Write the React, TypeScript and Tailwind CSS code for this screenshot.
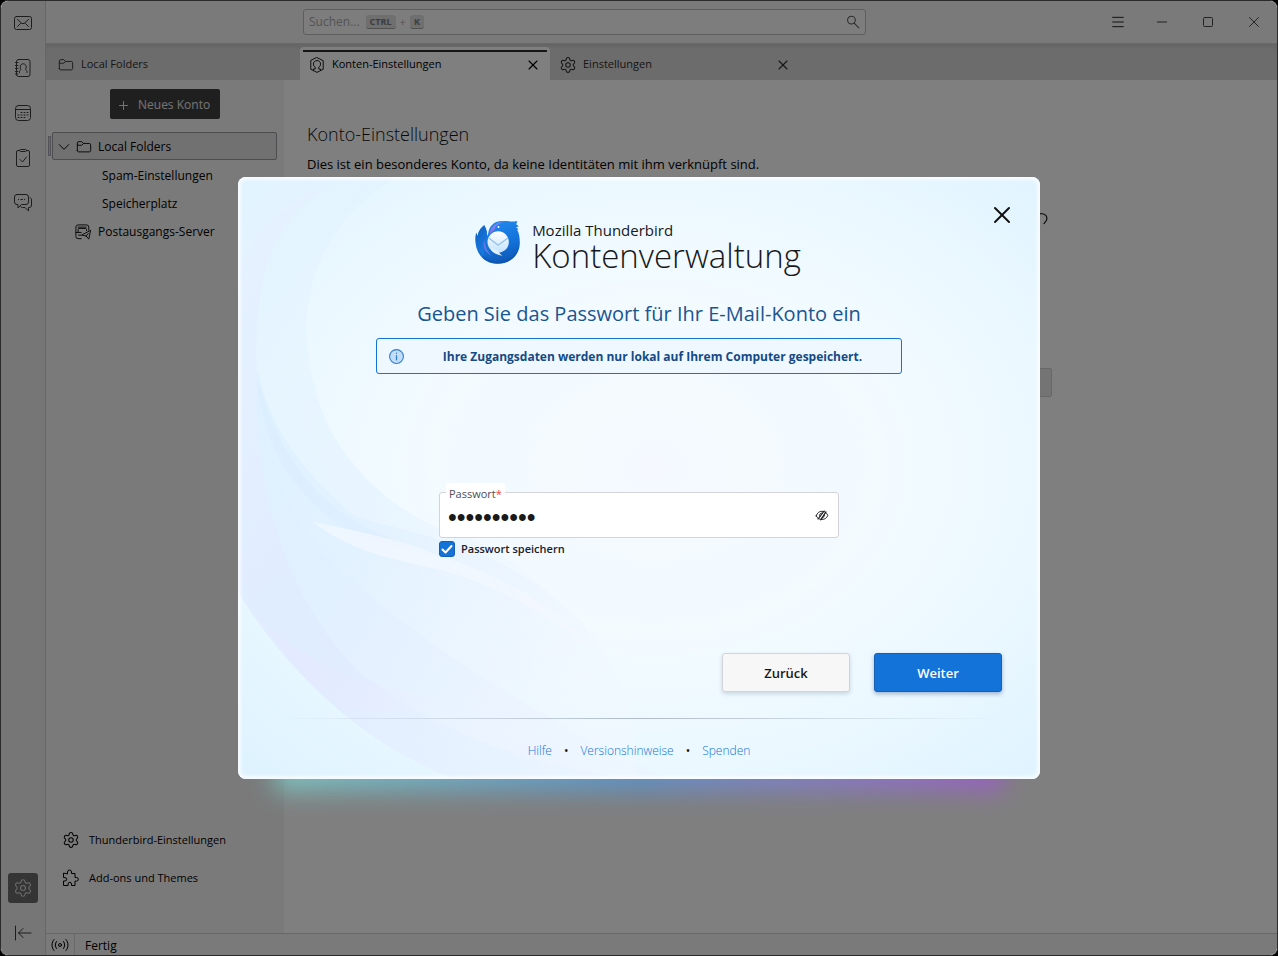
// src/App.tsx
import React, { useState } from 'react';
import { Menu, Minus, Settings, Square, X } from 'lucide-react';

type IconProps = { className?: string };

function Icon({ className = 'size-[18px]', children }: IconProps & { children: React.ReactNode }) {
  return (
    <svg className={className} viewBox="0 0 18 18" fill="none" stroke="currentColor" strokeLinecap="round" strokeLinejoin="round" aria-hidden="true">
      {children}
    </svg>
  );
}

const MailIcon = () => (
  <Icon>
    <rect x="0.5" y="2.5" width="17" height="13" rx="2" />
    <path d="m3.500 5.500 4.500 4h2l4.500-4M3.500 12.500l3-3M14.500 12.500l-3-3" />
  </Icon>
);

const AddressBookIcon = () => (
  <Icon>
    <rect x="2.500" y="0.5" width="13.500" height="17" rx="2" />
    <path d="M1.500 3.500h2.500M1.500 6.500h2.500M1.500 9.500h2.500M1.500 12.500h2.500M1.500 15h2.500" />
    <path d="M5.500 13.500v-1c0-1 .8-1.500 1.500-2-.5-.6-.8-1.500-.8-2.500 0-1.900 1.200-3.200 3-3.200s3 1.300 3 3.200c0 1-.3 1.900-.8 2.500.700.5 1.600 1 1.600 2v1" />
  </Icon>
);

const CalendarIcon = () => (
  <Icon>
    <rect x="1.500" y="1.500" width="15" height="15" rx="3" />
    <path d="M1.500 5.500h15" />
    <path d="M7 8.500h1M10 8.500h1M13 8.500h1M4 11h1M7 11h1M10 11h1M13 11h1M4 13.500h1M7 13.500h1M10 13.500h1" />
  </Icon>
);

const TasksIcon = () => (
  <Icon>
    <path d="M5.500 1.500H4a1.500 1.500 0 0 0-1.500 1.500v13A1.500 1.500 0 0 0 4 17.500h10a1.500 1.500 0 0 0 1.500-1.500V3A1.500 1.500 0 0 0 14 1.500h-1.500" />
    <path d="M5.500 1.500c0-.6.400-1 1-1h5c.6 0 1 .4 1 1s-.4 1-1 1h-5c-.6 0-1-.4-1-1zM6 10.500l2.500 2.500 4-5" />
  </Icon>
);

const ChatIcon = () => (
  <Icon>
    <path d="M3 .5h9A2.500 2.500 0 0 1 14.500 3v5a2.500 2.500 0 0 1-2.500 2.500H7.500L4 14v-3.500H3A2.500 2.500 0 0 1 .5 8V3A2.500 2.500 0 0 1 3 .5z" />
    <path d="M16 3.500c.9.500 1.500 1.300 1.500 2.500v5c0 1.500-.8 2.500-2.500 2.500h-.5v3.500L11 13.500H8.500c-.8 0-1.400-.3-1.800-.8M4.500 5.500h.2M7 5.500h1.500M10.500 5.500h.2" />
  </Icon>
);

const FolderIcon = () => (
  <Icon className="size-4">
    <path d="M1.500 13V4.500c0-.9.6-1.500 1.500-1.500h3.500l2 2H15c.9 0 1.500.6 1.500 1.500V13c0 .9-.6 1.500-1.500 1.500H3c-.9 0-1.500-.6-1.500-1.500z" />
    <path d="M1.500 7h5l2-2" />
  </Icon>
);

const OutgoingIcon = () => (
  <Icon className="size-4">
    <path d="M7 16.500H3.500A2.500 2.500 0 0 1 1 14V3.500A2.500 2.500 0 0 1 3.500 1h9.500a2.500 2.500 0 0 1 2.500 2.500V7" />
    <path d="M1 9.500h6M3.500 9V6c0-.6.400-1 1-1h7.500c.6 0 1 .4 1 1v1.500M4 12.500h3M3.500 3.500h9" />
    <path d="M17.500 7.500 15.500 17l-3-3.500L8 12.500zM12.500 13.500l2.500-3" />
  </Icon>
);

const AccountIcon = () => (
  <Icon className="size-4">
    <path d="m9 .7 7 3.500v9.600l-7 3.500-7-3.500V4.200z" />
    <path d="M5 15v-1.500h2V11.500C5.800 10.700 5 9.500 5 8c0-2.400 1.700-4 4-4s4 1.600 4 4c0 1.500-.8 2.700-2 3.500v2h2V15" />
  </Icon>
);

const PuzzleIcon = () => (
  <Icon>
    <path d="M5.500 4.500V3a2 2 0 0 1 4 0v1.500h3.500v4h1.500a1.800 1.800 0 0 1 0 3.600H13v4.400h-3.500V15a1.700 1.700 0 0 0-3.400 0v1.500H1.500V12H3a1.700 1.700 0 0 0 0-3.400H1.500V4.500z" />
  </Icon>
);

const CollapseIcon = () => (
  <Icon>
    <path d="M1.500 2v14M17 9H4.500M9 4.500 4.500 9 9 13.500" />
  </Icon>
);

const SignalIcon = () => (
  <Icon>
    <circle cx="9" cy="9" r="1.500" />
    <path d="M5.500 12.500c-1.600-2-1.600-5 0-7M12.500 5.500c1.600 2 1.600 5 0 7M3 14.500c-2.700-3-2.700-8 0-11M15 3.500c2.700 3 2.700 8 0 11" />
  </Icon>
);

const SearchIcon = () => (
  <Icon className="size-[14px]">
    <circle cx="7" cy="6.500" r="5" strokeWidth="1.300" />
    <path d="m10.500 10.500 6 6" strokeWidth="1.300" />
  </Icon>
);

const EyeOffIcon = () => (
  <Icon className="size-4">
    <path d="M2.500 10C3.500 6.500 6 4.800 9 4.800s5.500 1.700 6.500 4.700C14.500 12.500 12 14 9 14s-5.500-1.200-6.500-4z" />
    <path d="M9.500 6.800a2.800 2.800 0 0 0-3 4M11.800 8.500a2.800 2.800 0 0 1-2.800 3.700" />
    <path d="m4.500 13.500 7-9M7.500 14.500l6-9" strokeWidth="1.300" />
  </Icon>
);

function ThunderbirdLogo() {
  return (
    <svg className="h-11 w-[45px]" viewBox="10 9 134 132" aria-hidden="true">
      <defs>
        <linearGradient id="body" x1="0.300" y1="0" x2="0.600" y2="1">
          <stop offset="0" stopColor="#2289ee" />
          <stop offset="0.600" stopColor="#1271d8" />
          <stop offset="1" stopColor="#0f57b4" />
        </linearGradient>
        <linearGradient id="flame" x1="0" y1="0" x2="0.500" y2="1">
          <stop offset="0" stopColor="#0f5fc0" />
          <stop offset="1" stopColor="#1a7be2" />
        </linearGradient>
        <linearGradient id="mail" x1="0" y1="0" x2="0" y2="1">
          <stop offset="0" stopColor="#ffffff" />
          <stop offset="1" stopColor="#c3e2fd" />
        </linearGradient>
        <linearGradient id="beak" x1="0" y1="1" x2="1" y2="0">
          <stop offset="0" stopColor="#9a70e6" />
          <stop offset="0.600" stopColor="#7a80ee" />
          <stop offset="1" stopColor="#3d8df0" />
        </linearGradient>
      </defs>
      {/* body with the wing flame on the left and the crest on the right */}
      <path
        fill="url(#body)"
        d="M37 25C27 33 19 43 18 58l-5-11C3 95 27 140 77 140c40 0 67-28 67-62 0-16-2-30-8-40l4-1-7-6 8-3-8-6 4-9c-20 2-38-3-55 0-18 3-30 16-33 37l-4 8c2-12-2-24-8-33z"
      />
      <path fill="url(#flame)" d="M37 25C27 33 19 43 18 58l-5-11c-6 32 3 58 22 75 0-24 0-44 10-62 2-14-2-25-8-35z" />
      <path fill="url(#beak)" d="M53 53c2-22 18-40 50-41-10 3-20 7-27 13-5 4-6 9-9 14-4 2-9 7-14 14z" />
      <path fill="#0d52ab" opacity="0.600" d="M22 100c10 22 30 33 55 33 32 0 55-16 64-42-6 32-31 49-64 49-27 0-47-16-55-40z" />
      <path fill="#8377e8" opacity="0.700" d="M37 70c-6 20 2 37 22 46-10-10-18-24-22-46z" />
      <circle cx="79" cy="75" r="32" fill="url(#mail)" />
      <path fill="#dff0ff" d="M54 90c4 16 16 22 38 26-8-5-11-9-12-14z" />
      <path fill="none" stroke="#93c2f0" strokeWidth="4" strokeLinejoin="round" d="m51 63 28 22 29-22" />
      <circle cx="80" cy="30" r="3" fill="#fff" />
    </svg>
  );
}

// Soft ribbons behind the dialog content
function DialogArt() {
  return (
    <svg className="absolute inset-0 size-full" viewBox="0 0 802 602" preserveAspectRatio="none" aria-hidden="true">
      <defs>
        <radialGradient id="base" cx="0.520" cy="0.480" r="0.700">
          <stop offset="0" stopColor="#f5f9ff" />
          <stop offset="0.400" stopColor="#f3fbff" />
          <stop offset="0.700" stopColor="#ebf8ff" />
          <stop offset="1" stopColor="#dff3ff" />
        </radialGradient>
        <linearGradient id="sheet" x1="0" y1="0" x2="1" y2="1">
          <stop offset="0" stopColor="#e4f4ff" />
          <stop offset="0.500" stopColor="#dff0ff" />
          <stop offset="1" stopColor="#eff5ff" stopOpacity="0.300" />
        </linearGradient>
        <linearGradient id="lavender" x1="0" y1="0" x2="1" y2="1">
          <stop offset="0" stopColor="#e6f1ff" />
          <stop offset="0.500" stopColor="#dde8ff" />
          <stop offset="1" stopColor="#ecf0ff" stopOpacity="0.300" />
        </linearGradient>
        <linearGradient id="cyan" x1="0" y1="0" x2="1" y2="0.700">
          <stop offset="0" stopColor="#ddf1ff" />
          <stop offset="0.400" stopColor="#e2f1ff" />
          <stop offset="1" stopColor="#f2f7ff" stopOpacity="0.500" />
        </linearGradient>
        <linearGradient id="pink" x1="0" y1="0" x2="1" y2="0">
          <stop offset="0" stopColor="#e6e8ff" />
          <stop offset="1" stopColor="#e8ecff" stopOpacity="0" />
        </linearGradient>
      </defs>
      <rect width="802" height="602" fill="url(#base)" />
      <path fill="url(#sheet)" opacity="0.500" d="M0 0h160C70 50 45 150 92 253c30 50 65 78 106 97 80 20 130 80 157 120C300 520 100 560 0 415z" />
      <path fill="url(#lavender)" opacity="0.700" d="M90 10C40 40 24 90 20 140c-8 90 10 190 90 260 90 80 210 150 320 202H215C110 560 40 480 0 415V90C20 50 50 20 90 10z" />
      <path fill="url(#cyan)" opacity="0.800" d="M19 190c10 60 50 110 99 150 70 20 150 30 220 100 40 45 60 90 60 162-100-10-210-50-280-110C50 420 15 320 19 190z" />
      <path fill="#d6ebff" opacity="0.350" d="M19 200c20 70 50 115 99 145 30 17 60 26 90 34-60-8-100-20-125-45C40 295 22 250 19 200z" />
      <path fill="#f3f8ff" opacity="0.700" d="M75 345c50 10 90 18 133 36 60 20 110 50 145 88-45-30-90-60-150-76-40-10-85-15-128-48z" />
      <path fill="url(#pink)" opacity="0.600" d="M30 450c50 45 120 65 200 76-50 12-90 10-125 5-30-20-55-45-75-81z" />
    </svg>
  );
}

const railItems = [
  { label: 'E-Mail', icon: <MailIcon /> },
  { label: 'Adressbuch', icon: <AddressBookIcon /> },
  { label: 'Kalender', icon: <CalendarIcon /> },
  { label: 'Aufgaben', icon: <TasksIcon /> },
  { label: 'Chat', icon: <ChatIcon /> },
];

function Rail() {
  return (
    <nav className="flex w-[45px] shrink-0 flex-col items-center border-r border-[#cfcfcf] bg-[#ededed] py-[7px] text-[#3a3a3a]">
      <div className="flex flex-col gap-[15px]">
        {railItems.map((item) => (
          <button key={item.label} aria-label={item.label} className="flex size-[30px] items-center justify-center">
            {item.icon}
          </button>
        ))}
      </div>
      <button aria-label="Einstellungen" className="mt-auto flex size-[30px] items-center justify-center rounded-[3px] bg-[#6b6b6b] text-[#d8d8d8]">
        <Settings className="size-5" strokeWidth={1.3} />
      </button>
      <button aria-label="Leiste ausblenden" className="mt-[15px] flex size-[30px] items-center justify-center">
        <CollapseIcon />
      </button>
    </nav>
  );
}

function TitleBar() {
  return (
    <header className="flex h-[43px] shrink-0 items-center border-b border-[#d2d2d2] bg-[#f5f5f5]">
      <label className="ml-[257px] flex h-[26px] w-[563px] items-center rounded-[3px] border border-[#bdbdbd] bg-[#fafafa] px-[5px] text-xs text-[#a8a8a8]">
        <span>Suchen...</span>
        <kbd className="ml-[6px] rounded-[3px] border-b border-[#a0a0a0] bg-[#dedede] px-1 font-[Open_Sans] text-[9px] leading-[13px] font-bold text-[#7a7a7a]">CTRL</kbd>
        <span className="px-1 text-[11px]">+</span>
        <kbd className="rounded-[3px] border-b border-[#a0a0a0] bg-[#dedede] px-1 font-[Open_Sans] text-[9px] leading-[13px] font-bold text-[#7a7a7a]">K</kbd>
        <input type="search" aria-label="Suchen" className="min-w-0 flex-1 bg-transparent outline-none" />
        <span className="text-[#555]">
          <SearchIcon />
        </span>
      </label>
      <div className="ml-auto flex text-[#444]">
        <button aria-label="Menü" className="flex w-[42px] items-center justify-center text-[#222]">
          <Menu className="size-4" strokeWidth={1.5} />
        </button>
        <button aria-label="Minimieren" className="flex w-[46px] items-center justify-center">
          <Minus className="size-4" strokeWidth={1.5} />
        </button>
        <button aria-label="Maximieren" className="flex w-[46px] items-center justify-center">
          <Square className="size-3" strokeWidth={2} />
        </button>
        <button aria-label="Schließen" className="flex w-[46px] items-center justify-center">
          <X className="size-[18px]" strokeWidth={1.3} />
        </button>
      </div>
    </header>
  );
}

function TabBar() {
  return (
    <div className="flex h-9 shrink-0 items-end bg-[#d9d9d9] text-[11px] text-[#2c2c2c] shadow-[inset_0_4px_5px_-2px_#c4c4c4]">
      <div className="flex h-8 w-[254px] items-center gap-[7px] px-3 pt-px">
        <FolderIcon />
        <span>Local Folders</span>
      </div>
      <div className="flex h-[33px] w-[250px] flex-col rounded-t-[4px] bg-white px-[3px] pt-[3px] text-black">
        <div className="h-[2px] bg-[#2b2b2b]" />
        <div className="flex flex-1 items-center gap-[7px] px-[6px] pb-[3px]">
          <AccountIcon />
          <span>Konten-Einstellungen</span>
          <button aria-label="Tab schließen" className="ml-auto">
            <X className="size-4" strokeWidth={1.6} />
          </button>
        </div>
      </div>
      <div className="flex h-8 w-[250px] items-center gap-[6px] px-[9px] pt-px">
        <Settings className="size-[18px]" strokeWidth={1.4} />
        <span>Einstellungen</span>
        <button aria-label="Tab schließen" className="ml-auto">
          <X className="size-4" strokeWidth={1.6} />
        </button>
      </div>
    </div>
  );
}

function Sidebar() {
  return (
    <aside className="flex w-[238px] shrink-0 flex-col bg-[#f5f5f5] text-xs text-black">
      <button className="mx-auto mt-[9px] flex h-[30px] w-[110px] items-center gap-[10px] rounded-[2px] bg-[#3f3f3f] px-[9px] pt-[2px] whitespace-nowrap text-[#e8e8e8]">
        <Icon className="size-[9px] shrink-0">
          <path d="M9 1v16M1 9h16" strokeWidth="2" />
        </Icon>
        Neues Konto
      </button>
      <div className="mt-[13px] flex items-center gap-px pl-[2px]">
        <span className="h-5 w-[3px] border border-[#a5a5b0] bg-[#d5d5d5]" />
        <button className="mr-[7px] flex h-7 flex-1 items-center rounded-[2px] border border-[#9a9a9f] bg-[#e3e3e3] pt-[2px]">
          <Icon className="ml-[5px] size-3">
            <path d="m2 5.500 7 7 7-7" strokeWidth="1.500" />
          </Icon>
          <span className="mx-[6px]">
            <FolderIcon />
          </span>
          Local Folders
        </button>
      </div>
      <a href="#spam" className="flex h-7 items-center pt-[3px] pl-14">Spam-Einstellungen</a>
      <a href="#speicherplatz" className="flex h-7 items-center pt-[3px] pl-14">Speicherplatz</a>
      <a href="#postausgang" className="flex h-7 items-center gap-[7px] pt-[3px] pl-[29px]">
        <OutgoingIcon />
        Postausgangs-Server
      </a>
      <div className="mt-auto mb-9 text-[11px]">
        <a href="#einstellungen" className="flex h-[38px] items-center gap-[9px] pl-4">
          <Settings className="size-[18px]" strokeWidth={1.4} />
          Thunderbird-Einstellungen
        </a>
        <a href="#addons" className="flex h-[38px] items-center gap-[9px] pl-4">
          <PuzzleIcon />
          Add-ons und Themes
        </a>
      </div>
    </aside>
  );
}

function AccountPage() {
  return (
    <main className="min-w-0 flex-1 bg-white px-[23px] pt-[42px] text-black">
      <h1 className="text-lg leading-6 font-light text-[#111]">Konto-Einstellungen</h1>
      <p className="mt-2 text-[13px] leading-5">Dies ist ein besonderes Konto, da keine Identitäten mit ihm verknüpft sind.</p>
      <div className="mt-[39px] flex w-[745px] flex-col items-end">
        <Icon className="mr-1 size-3">
          <path d="M1 1h8a7 7 0 0 1 6 11l-3 4" strokeWidth="1.600" />
        </Icon>
        <button aria-label="Ordner wählen" className="mt-[143px] h-[29px] w-28 rounded-[2px] border border-[#cfcfcf] bg-[#e8e8e8]" />
      </div>
    </main>
  );
}

function StatusBar() {
  return (
    <footer className="flex h-[22px] shrink-0 items-center border-t border-[#cfcfcf] bg-[#f5f5f5] text-xs text-black">
      <span className="flex h-full w-[29px] items-center justify-center border-r border-[#d5d5d5]">
        <SignalIcon />
      </span>
      <span className="pt-[2px] pl-[10px]">Fertig</span>
    </footer>
  );
}

function PasswordDialog() {
  const [password, setPassword] = useState('geheim1234');
  const [remember, setRemember] = useState(true);

  return (
    <div className="absolute inset-0 flex items-center justify-center bg-black/50">
      <div className="relative w-[802px]">
        <div className="absolute inset-x-9 -bottom-3 h-10 bg-gradient-to-r from-[#7fe3dc] via-[#4d9be8] to-[#a64fe0] opacity-65 blur-[12px]" />
        <section role="dialog" aria-label="Kontenverwaltung" className="relative flex min-h-[602px] flex-col overflow-hidden rounded-lg bg-[#f2faff]">
          <DialogArt />
          <div className="pointer-events-none absolute inset-0 rounded-lg shadow-[inset_0_0_3px_3px_rgba(255,255,255,0.7)]" />
          <button aria-label="Dialog schließen" className="absolute top-6 right-6 z-10 flex size-7 items-center justify-center text-[#111]">
            <X className="size-7" strokeWidth={1.7} />
          </button>

          <div className="relative flex flex-1 flex-col px-[38px] pt-[43px]">
            <div className="flex justify-center gap-3 pr-[2px]">
              <ThunderbirdLogo />
              <div className="text-[#18181b]">
                <p className="text-[15px] leading-5">Mozilla Thunderbird</p>
                <h2 className="text-[33px] leading-8 font-light">Kontenverwaltung</h2>
              </div>
            </div>

            <h3 className="mt-7 text-center text-xl leading-7 text-[#1a5590]">Geben Sie das Passwort für Ihr E-Mail-Konto ein</h3>
            <div className="mx-auto mt-[10px] flex h-9 w-[526px] items-center rounded-[3px] border border-[#1373d9] bg-[#eff8ff] px-3 text-[#134a86]">
              <Icon className="size-[15px] text-[#2a7fdc]">
                <circle cx="9" cy="9" r="8.300" fill="#c3dcf7" strokeWidth="1.300" />
                <path d="M9 8v5M9 5v.2" strokeWidth="1.500" />
              </Icon>
              <p className="flex-1 pt-[2px] pl-3 text-center text-xs font-bold">Ihre Zugangsdaten werden nur lokal auf Ihrem Computer gespeichert.</p>
            </div>

            <form className="mx-auto mt-[118px] w-[400px]" onSubmit={(e) => e.preventDefault()}>
              <div className="relative flex h-[46px] items-center rounded-[3px] border border-[#d4d4d8] bg-white pr-2">
                <label htmlFor="password" className="absolute -top-[10px] left-[6px] rounded-[3px] bg-white px-[3px] text-[11px] leading-[22px] font-medium text-[#4c4d58]">
                  Passwort<span className="text-[#ef4444]">*</span>
                </label>
                <input
                  id="password"
                  type="password"
                  value={password}
                  onChange={(e) => setPassword(e.target.value)}
                  className="h-full min-w-0 flex-1 bg-transparent pt-1 pl-2 font-[Liberation_Sans] text-[25px] text-[#1a1a1a] outline-none"
                />
                <button type="button" aria-label="Passwort anzeigen" className="text-[#18181b]">
                  <EyeOffIcon />
                </button>
              </div>
              <label className="mt-[3px] flex items-center gap-[6px] text-[11px] leading-4 font-semibold text-[#1a202c]">
                <span className="relative flex size-4">
                  <input
                    type="checkbox"
                    checked={remember}
                    onChange={(e) => setRemember(e.target.checked)}
                    className="size-4 appearance-none rounded-[3px] border border-[#175fb0] bg-white checked:bg-[#1373d9]"
                  />
                  {remember && (
                    <svg className="pointer-events-none absolute inset-0 size-4" viewBox="0 0 16 16" fill="none" stroke="#fff" strokeWidth="2" strokeLinecap="round" strokeLinejoin="round">
                      <path d="m3.500 8.500 3 3 6-6.500" />
                    </svg>
                  )}
                </span>
                Passwort speichern
              </label>
            </form>

            <div className="mt-auto flex justify-end gap-6 text-[13px] font-semibold">
              <button className="h-[39px] w-32 rounded-[3px] border border-[#d4d4d8] bg-[#f7f7f7] pt-[2px] text-[#18181b] shadow-[0_2px_4px_rgba(60,80,110,0.2)]">Zurück</button>
              <button className="h-[39px] w-32 rounded-[3px] border border-[#175fb0] bg-[#1373d9] pt-[2px] text-white shadow-[0_2px_4px_rgba(20,50,110,0.35)]">Weiter</button>
            </div>

            <div className="mt-[26px] h-px bg-gradient-to-r from-transparent via-[#aebccb] to-transparent" />
            <ul className="flex h-[60px] items-center justify-center gap-3 pt-[3px] text-xs text-[#1373d9]">
              <li><a href="#hilfe" className="font-light">Hilfe</a></li>
              <li className="text-[#18181b]">•</li>
              <li><a href="#versionshinweise" className="font-light">Versionshinweise</a></li>
              <li className="text-[#18181b]">•</li>
              <li><a href="#spenden" className="font-light">Spenden</a></li>
            </ul>
          </div>
        </section>
      </div>
    </div>
  );
}

export default function App() {
  return (
    <div className="h-screen bg-black font-['Open_Sans','Noto_Sans',sans-serif]">
      <div className="relative flex h-full overflow-hidden rounded-lg border border-[#2b2b2b] bg-white">
        <Rail />
        <div className="flex min-w-0 flex-1 flex-col">
          <TitleBar />
          <TabBar />
          <div className="flex min-h-0 flex-1">
            <Sidebar />
            <AccountPage />
          </div>
          <StatusBar />
        </div>
        <PasswordDialog />
      </div>
    </div>
  );
}
